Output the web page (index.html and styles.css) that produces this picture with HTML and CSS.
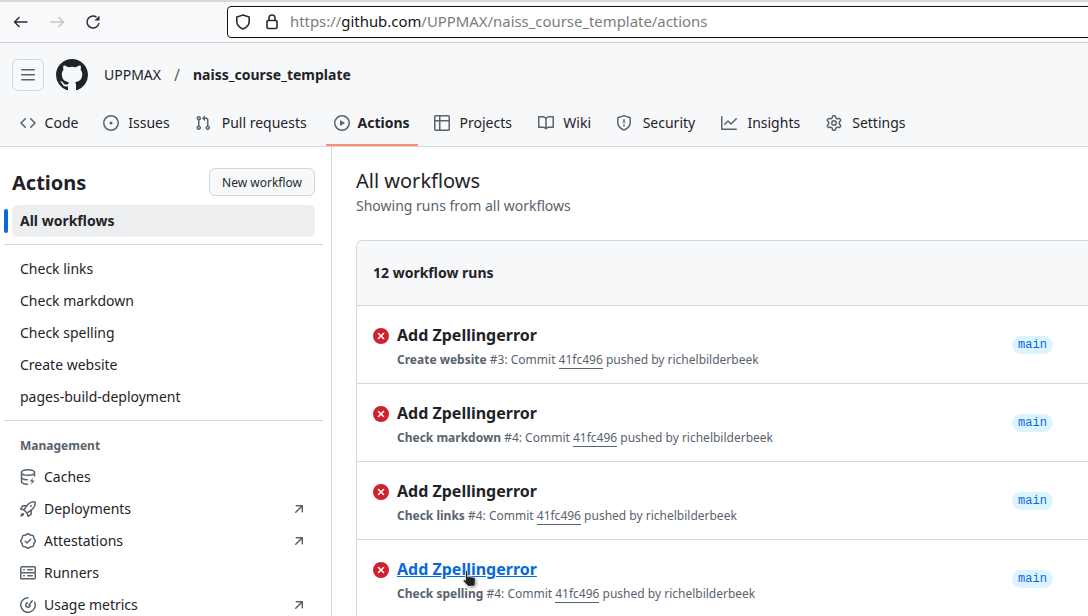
FILE: index.html
```html
<!DOCTYPE html>
<html lang="en">
<head>
<meta charset="utf-8">
<title>Actions · UPPMAX/naiss_course_template</title>
<link rel="stylesheet" href="styles.css">
</head>
<body>
<svg class="defs" width="0" height="0" aria-hidden="true">
  <symbol id="i-code" viewBox="0 0 16 16"><path d="m11.28 3.22 4.25 4.25a.75.75 0 0 1 0 1.06l-4.25 4.25a.749.749 0 0 1-1.275-.326.749.749 0 0 1 .215-.734L13.94 8l-3.72-3.72a.749.749 0 0 1 .326-1.275.749.749 0 0 1 .734.215Zm-6.56 0a.751.751 0 0 1 1.042.018.751.751 0 0 1 .018 1.042L2.06 8l3.72 3.72a.749.749 0 0 1-.326 1.275.749.749 0 0 1-.734-.215L.47 8.53a.75.75 0 0 1 0-1.06Z"/></symbol>
  <symbol id="i-issue" viewBox="0 0 16 16"><path d="M8 9.5a1.5 1.5 0 1 0 0-3 1.5 1.5 0 0 0 0 3Z"/><path d="M8 0a8 8 0 1 1 0 16A8 8 0 0 1 8 0ZM1.5 8a6.5 6.5 0 1 0 13 0 6.5 6.5 0 0 0-13 0Z"/></symbol>
  <symbol id="i-pr" viewBox="0 0 16 16"><path d="M1.5 3.25a2.25 2.25 0 1 1 3 2.122v5.256a2.251 2.251 0 1 1-1.5 0V5.372A2.25 2.25 0 0 1 1.5 3.25Zm5.677-.177L9.573.677A.25.25 0 0 1 10 .854V2.5h1A2.5 2.5 0 0 1 13.5 5v5.628a2.251 2.251 0 1 1-1.5 0V5a1 1 0 0 0-1-1h-1v1.646a.25.25 0 0 1-.427.177L7.177 3.427a.25.25 0 0 1 0-.354ZM3.75 2.5a.75.75 0 1 0 0 1.5.75.75 0 0 0 0-1.5Zm0 9.5a.75.75 0 1 0 0 1.5.75.75 0 0 0 0-1.5Zm8.25.75a.75.75 0 1 0 1.5 0 .75.75 0 0 0-1.5 0Z"/></symbol>
  <symbol id="i-play" viewBox="0 0 16 16"><path d="M8 0a8 8 0 1 1 0 16A8 8 0 0 1 8 0ZM1.5 8a6.5 6.5 0 1 0 13 0 6.5 6.5 0 0 0-13 0Zm4.879-2.773 4.264 2.559a.25.25 0 0 1 0 .428l-4.264 2.559A.25.25 0 0 1 6 10.559V5.442a.25.25 0 0 1 .379-.215Z"/></symbol>
  <symbol id="i-table" viewBox="0 0 16 16"><path d="M0 1.75C0 .784.784 0 1.75 0h12.5C15.216 0 16 .784 16 1.75v12.5A1.75 1.75 0 0 1 14.25 16H1.75A1.75 1.75 0 0 1 0 14.25ZM6.5 6.5v8h7.75a.25.25 0 0 0 .25-.25V6.5Zm8-1.5V1.75a.25.25 0 0 0-.25-.25H6.5V5Zm-13 1.5v7.75c0 .138.112.25.25.25H5v-8ZM5 5V1.5H1.75a.25.25 0 0 0-.25.25V5Z"/></symbol>
  <symbol id="i-book" viewBox="0 0 16 16"><path d="M0 1.75A.75.75 0 0 1 .75 1h4.253c1.227 0 2.317.59 3 1.501A3.743 3.743 0 0 1 11.006 1h4.245a.75.75 0 0 1 .75.75v10.5a.75.75 0 0 1-.75.75h-4.507a2.25 2.25 0 0 0-1.591.659l-.622.621a.75.75 0 0 1-1.06 0l-.622-.621A2.25 2.25 0 0 0 5.258 13H.75a.75.75 0 0 1-.75-.75Zm7.251 10.324.004-5.073-.002-2.253A2.25 2.25 0 0 0 5.003 2.5H1.5v9h3.757a3.75 3.75 0 0 1 1.994.574ZM8.755 4.75l-.004 7.322a3.752 3.752 0 0 1 1.992-.572H14.5v-9h-3.495a2.25 2.25 0 0 0-2.25 2.25Z"/></symbol>
  <symbol id="i-shield" viewBox="0 0 16 16"><path d="M7.467.133a1.748 1.748 0 0 1 1.066 0l5.25 1.68A1.75 1.75 0 0 1 15 3.48V7c0 1.566-.32 3.182-1.303 4.682-.983 1.498-2.585 2.813-5.032 3.855a1.697 1.697 0 0 1-1.33 0c-2.447-1.042-4.049-2.357-5.032-3.855C1.32 10.182 1 8.566 1 7V3.48a1.75 1.75 0 0 1 1.217-1.667Zm.61 1.429a.25.25 0 0 0-.153 0l-5.25 1.68a.25.25 0 0 0-.174.238V7c0 1.358.275 2.666 1.057 3.86.784 1.194 2.121 2.34 4.366 3.297a.196.196 0 0 0 .154 0c2.245-.956 3.582-2.104 4.366-3.298C13.225 9.666 13.5 8.36 13.5 7V3.48a.251.251 0 0 0-.174-.237l-5.25-1.68ZM8.75 4.75v3a.75.75 0 0 1-1.5 0v-3a.75.75 0 0 1 1.5 0ZM9 10.5a1 1 0 1 1-2 0 1 1 0 0 1 2 0Z"/></symbol>
  <symbol id="i-graph" viewBox="0 0 16 16"><path d="M1.5 1.75V13.5h13.75a.75.75 0 0 1 0 1.5H.75a.75.75 0 0 1-.75-.75V1.75a.75.75 0 0 1 1.5 0Zm14.28 2.53-5.25 5.25a.75.75 0 0 1-1.06 0L7 7.06 4.28 9.78a.751.751 0 0 1-1.042-.018.751.751 0 0 1-.018-1.042l3.25-3.25a.75.75 0 0 1 1.06 0L10 7.94l4.72-4.72a.751.751 0 0 1 1.042.018.751.751 0 0 1 .018 1.042Z"/></symbol>
  <symbol id="i-gear" viewBox="0 0 16 16"><path d="M8 0a8.2 8.2 0 0 1 .701.031C9.444.095 9.99.645 10.16 1.29l.288 1.107c.018.066.079.158.212.224.231.114.454.243.668.386.123.082.233.09.299.071l1.103-.303c.644-.176 1.392.021 1.82.63.27.385.506.792.704 1.218.315.675.111 1.422-.364 1.891l-.814.806c-.049.048-.098.147-.088.294.016.257.016.515 0 .772-.01.147.038.246.088.294l.814.806c.475.469.679 1.216.364 1.891a7.977 7.977 0 0 1-.704 1.217c-.428.61-1.176.807-1.82.63l-1.102-.302c-.067-.019-.177-.011-.3.071a5.909 5.909 0 0 1-.668.386c-.133.066-.194.158-.211.224l-.29 1.106c-.168.646-.715 1.196-1.458 1.26a8.006 8.006 0 0 1-1.402 0c-.743-.064-1.289-.614-1.458-1.26l-.289-1.106c-.018-.066-.079-.158-.212-.224a5.738 5.738 0 0 1-.668-.386c-.123-.082-.233-.09-.299-.071l-1.103.303c-.644.176-1.392-.021-1.82-.63a8.12 8.12 0 0 1-.704-1.218c-.315-.675-.111-1.422.363-1.891l.815-.806c.05-.048.098-.147.088-.294a6.214 6.214 0 0 1 0-.772c.01-.147-.038-.246-.088-.294l-.815-.806C.635 6.045.431 5.298.746 4.623a7.92 7.92 0 0 1 .704-1.217c.428-.61 1.176-.807 1.82-.63l1.102.302c.067.019.177.011.3-.071.214-.143.437-.272.668-.386.133-.066.194-.158.211-.224l.29-1.106C6.009.645 6.556.095 7.299.03 7.53.01 7.764 0 8 0Zm-.571 1.525c-.036.003-.108.036-.137.146l-.289 1.105c-.147.561-.549.967-.998 1.189-.173.086-.34.183-.5.29-.417.278-.97.423-1.529.27l-1.103-.303c-.109-.03-.175.016-.195.045-.22.312-.412.644-.573.99-.014.031-.021.11.059.19l.815.806c.411.406.562.957.53 1.456a4.709 4.709 0 0 0 0 .582c.032.499-.119 1.05-.53 1.456l-.815.806c-.081.08-.073.159-.059.19.162.346.353.677.573.989.02.03.085.076.195.046l1.102-.303c.56-.153 1.113-.008 1.53.27.161.107.328.204.501.29.447.222.85.629.997 1.189l.289 1.105c.029.109.101.143.137.146a6.6 6.6 0 0 0 1.142 0c.036-.003.108-.036.137-.146l.289-1.105c.147-.561.549-.967.998-1.189.173-.086.34-.183.5-.29.417-.278.97-.423 1.529-.27l1.103.303c.109.029.175-.016.195-.045.22-.313.411-.644.573-.99.014-.031.021-.11-.059-.19l-.815-.806c-.411-.406-.562-.957-.53-1.456a4.709 4.709 0 0 0 0-.582c-.032-.499.119-1.05.53-1.456l.815-.806c.081-.08.073-.159.059-.19a6.464 6.464 0 0 0-.573-.989c-.02-.03-.085-.076-.195-.046l-1.102.303c-.56.153-1.113.008-1.53-.27a4.44 4.44 0 0 0-.501-.29c-.447-.222-.85-.629-.997-1.189l-.289-1.105c-.029-.11-.101-.143-.137-.146a6.6 6.6 0 0 0-1.142 0ZM11 8a3 3 0 1 1-6 0 3 3 0 0 1 6 0ZM9.5 8a1.5 1.5 0 1 0-3.001.001A1.5 1.5 0 0 0 9.5 8Z"/></symbol>
  <symbol id="i-bars" viewBox="0 0 16 16"><path d="M1 2.75A.75.75 0 0 1 1.75 2h12.5a.75.75 0 0 1 0 1.5H1.75A.75.75 0 0 1 1 2.75Zm0 5A.75.75 0 0 1 1.75 7h12.5a.75.75 0 0 1 0 1.5H1.75A.75.75 0 0 1 1 7.75ZM1.75 12h12.5a.75.75 0 0 1 0 1.5H1.75a.75.75 0 0 1 0-1.5Z"/></symbol>
  <symbol id="i-github" viewBox="0 0 16 16"><path d="M8 0c4.42 0 8 3.58 8 8a8.013 8.013 0 0 1-5.45 7.59c-.4.08-.55-.17-.55-.38 0-.27.01-1.13.01-2.2 0-.75-.25-1.23-.54-1.48 1.78-.2 3.65-.88 3.65-3.95 0-.88-.31-1.59-.82-2.15.08-.2.36-1.02-.08-2.12 0 0-.67-.22-2.2.82-.64-.18-1.32-.27-2-.27-.68 0-1.36.09-2 .27-1.53-1.03-2.2-.82-2.2-.82-.44 1.1-.16 1.92-.08 2.12-.51.56-.82 1.28-.82 2.15 0 3.06 1.86 3.75 3.64 3.95-.23.2-.44.55-.51 1.07-.46.21-1.61.55-2.33-.66-.15-.24-.6-.83-1.23-.82-.67.01-.27.38.01.53.34.19.73.9.82 1.13.16.45.68 1.31 2.69.94 0 .67.01 1.3.01 1.49 0 .21-.15.45-.55.38A7.995 7.995 0 0 1 0 8c0-4.42 3.58-8 8-8Z"/></symbol>
  <symbol id="i-x" viewBox="0 0 16 16"><path d="M2.343 13.657A8 8 0 1 1 13.658 2.343 8 8 0 0 1 2.343 13.657ZM6.03 4.97a.751.751 0 0 0-1.042.018.751.751 0 0 0-.018 1.042L6.94 8 4.97 9.97a.749.749 0 0 0 .326 1.275.749.749 0 0 0 .734-.215L8 9.06l1.97 1.97a.749.749 0 0 0 1.275-.326.749.749 0 0 0-.215-.734L9.06 8l1.97-1.97a.749.749 0 0 0-.326-1.275.749.749 0 0 0-.734.215L8 6.94Z"/></symbol>
  <symbol id="i-cache" viewBox="0 0 16 16"><path d="M14.5 7V3.5C14.5 2 11.6.75 8 .75S1.5 2 1.5 3.5v9C1.5 14 4.2 15.2 7.5 15.25M1.5 3.5C1.5 5 4.4 6.25 8 6.25s6.5-1.25 6.5-2.75M1.5 8C1.5 9.4 4 10.6 7.2 10.75" fill="none" stroke="currentColor" stroke-width="1.5" stroke-linecap="round"/><path d="M13 8.5 9.8 12.4h2.2L11 15.8l3.6-4.4h-2.3Z"/></symbol>
  <symbol id="i-rocket" viewBox="0 0 16 16"><path d="M14.064 0h.186C15.216 0 16 .784 16 1.75v.186a8.752 8.752 0 0 1-2.564 6.186l-.458.459c-.314.314-.641.616-.979.904v3.207c0 .608-.315 1.172-.833 1.49l-2.774 1.707a.749.749 0 0 1-1.11-.418l-.954-3.102a1.214 1.214 0 0 1-.145-.125L3.754 9.816a1.218 1.218 0 0 1-.124-.145L.528 8.717a.749.749 0 0 1-.418-1.11l1.71-2.774A1.748 1.748 0 0 1 3.31 4h3.204c.288-.338.59-.665.904-.979l.459-.458A8.749 8.749 0 0 1 14.064 0ZM8.938 3.623h-.002l-.458.458c-.76.76-1.437 1.598-2.02 2.5l-1.5 2.317 2.143 2.143 2.317-1.5c.902-.583 1.74-1.26 2.499-2.02l.459-.458a7.25 7.25 0 0 0 2.123-5.127V1.75a.25.25 0 0 0-.25-.25h-.186a7.249 7.249 0 0 0-5.125 2.123ZM3.56 14.56c-.732.732-2.334 1.045-3.005 1.148a.234.234 0 0 1-.201-.064.234.234 0 0 1-.064-.201c.103-.671.416-2.273 1.15-3.003a1.502 1.502 0 1 1 2.12 2.12Zm6.94-3.935c-.088.06-.177.118-.266.175l-2.35 1.521.548 1.783 1.949-1.2a.25.25 0 0 0 .119-.213ZM3.678 8.116 5.2 5.766c.058-.09.117-.178.176-.266H3.309a.25.25 0 0 0-.213.119l-1.2 1.95ZM12 5a1 1 0 1 1-2 0 1 1 0 0 1 2 0Z"/></symbol>
  <symbol id="i-verified" viewBox="0 0 16 16"><path d="m9.585.52.929.68c.153.112.331.186.518.215l1.138.175a2.678 2.678 0 0 1 2.24 2.24l.174 1.139c.029.187.103.365.215.518l.68.928a2.677 2.677 0 0 1 0 3.17l-.68.928a1.174 1.174 0 0 0-.215.518l-.175 1.138a2.678 2.678 0 0 1-2.241 2.241l-1.138.175a1.17 1.17 0 0 0-.518.215l-.928.68a2.677 2.677 0 0 1-3.17 0l-.928-.68a1.174 1.174 0 0 0-.518-.215L3.83 14.41a2.678 2.678 0 0 1-2.24-2.24l-.175-1.138a1.17 1.17 0 0 0-.215-.518l-.68-.928a2.677 2.677 0 0 1 0-3.17l.68-.928c.112-.153.186-.331.215-.518l.175-1.14a2.678 2.678 0 0 1 2.24-2.24l1.139-.175c.187-.029.365-.103.518-.215l.928-.68a2.677 2.677 0 0 1 3.17 0ZM7.303 1.728l-.927.68a2.67 2.67 0 0 1-1.18.489l-1.137.174a1.179 1.179 0 0 0-.987.987l-.174 1.136a2.677 2.677 0 0 1-.489 1.18l-.68.928a1.18 1.18 0 0 0 0 1.394l.68.927c.256.348.424.753.489 1.18l.174 1.137c.078.509.478.909.987.987l1.136.174a2.67 2.67 0 0 1 1.18.489l.928.68c.414.305.979.305 1.394 0l.927-.68a2.67 2.67 0 0 1 1.18-.489l1.137-.174a1.18 1.18 0 0 0 .987-.987l.174-1.136a2.67 2.67 0 0 1 .489-1.18l.68-.928a1.176 1.176 0 0 0 0-1.394l-.68-.927a2.686 2.686 0 0 1-.489-1.18l-.174-1.137a1.179 1.179 0 0 0-.987-.987l-1.136-.174a2.677 2.677 0 0 1-1.18-.489l-.928-.68a1.176 1.176 0 0 0-1.394 0ZM11.28 6.78l-3.75 3.75a.75.75 0 0 1-1.06 0L4.72 8.78a.751.751 0 0 1 .018-1.042.751.751 0 0 1 1.042-.018l1.22 1.22 3.22-3.22a.751.751 0 0 1 1.042.018.751.751 0 0 1 .018 1.042Z"/></symbol>
  <symbol id="i-server" viewBox="0 0 16 16"><path d="M1.75 1h12.5c.966 0 1.75.784 1.75 1.75v4c0 .372-.116.717-.314 1 .198.283.314.628.314 1v4a1.75 1.75 0 0 1-1.75 1.75H1.75A1.75 1.75 0 0 1 0 13.75v-4c0-.372.116-.717.314-1a1.739 1.739 0 0 1-.314-1v-4C0 1.784.784 1 1.75 1ZM1.5 2.75v4c0 .138.112.25.25.25h12.5a.25.25 0 0 0 .25-.25v-4a.25.25 0 0 0-.25-.25H1.75a.25.25 0 0 0-.25.25Zm.25 5.75a.25.25 0 0 0-.25.25v4c0 .138.112.25.25.25h12.5a.25.25 0 0 0 .25-.25v-4a.25.25 0 0 0-.25-.25ZM7 4.75A.75.75 0 0 1 7.75 4h4.5a.75.75 0 0 1 0 1.5h-4.5A.75.75 0 0 1 7 4.75ZM7.75 10h4.5a.75.75 0 0 1 0 1.5h-4.5a.75.75 0 0 1 0-1.5ZM3 4.75A.75.75 0 0 1 3.75 4h.5a.75.75 0 0 1 0 1.5h-.5A.75.75 0 0 1 3 4.75ZM3.75 10h.5a.75.75 0 0 1 0 1.5h-.5a.75.75 0 0 1 0-1.5Z"/></symbol>
  <symbol id="i-meter" viewBox="0 0 16 16"><path d="M8 .75a7.25 7.25 0 1 0 6.7 4.5" fill="none" stroke="currentColor" stroke-width="1.5" stroke-linecap="round"/><path d="M12.2 3.8 8.9 8.2" fill="none" stroke="currentColor" stroke-width="1.5" stroke-linecap="round"/><path d="M8 5a3 3 0 1 0 3 3h-1.5A1.5 1.5 0 1 1 8 6.5Z"/></symbol>
  <symbol id="i-upright" viewBox="0 0 16 16"><path d="M4.53 4.75A.75.75 0 0 1 5.28 4h6.01a.75.75 0 0 1 .75.75v6.01a.75.75 0 0 1-1.5 0v-4.2l-5.26 5.261a.749.749 0 0 1-1.275-.326.749.749 0 0 1 .215-.734L9.48 5.5h-4.2a.75.75 0 0 1-.75-.75Z"/></symbol>
</svg>

<div class="page">
  <div class="browser">
    <div class="nav-buttons">
      <svg class="b-icon" viewBox="0 0 16 16"><path d="M14.5 8H1.5M6.500 3 1.500 8l5 5"/></svg>
      <svg class="b-icon off" viewBox="0 0 16 16"><path d="M1.5 8H14.5M9.500 3l5 5-5 5"/></svg>
      <svg class="b-icon" viewBox="0 0 16 16"><path d="M14 9A6 6 0 1 1 11.500 3.100"/><path class="solid" d="M14.500 1.500v5h-5Z"/></svg>
    </div>
    <div class="urlbar">
      <svg class="b-icon heavy" viewBox="0 0 16 16"><path d="M8 1 14.200 3v4.600c0 3.300-2.400 5.900-6.200 7.400-3.800-1.500-6.200-4.100-6.200-7.400V3Z"/></svg>
      <svg class="b-icon heavy" viewBox="0 0 16 16"><path d="M3 7.500a1 1 0 0 1 1-1h8a1 1 0 0 1 1 1v6a1 1 0 0 1-1 1H4a1 1 0 0 1-1-1ZM5 6.500v-2.500a3 3 0 0 1 6 0v2.500"/></svg>
      <span class="url">https://<span class="url-host">github.com</span>/UPPMAX/naiss_course_template/actions</span>
    </div>
  </div>

  <header class="gh-header">
    <div class="repo-line">
      <button class="menu-btn"><svg class="icon"><use href="#i-bars"/></svg></button>
      <svg class="logo"><use href="#i-github"/></svg>
      <span class="owner">UPPMAX</span>
      <span class="slash">/</span>
      <strong class="repo">naiss_course_template</strong>
    </div>
    <nav class="tabs">
      <a class="tab"><svg class="icon"><use href="#i-code"/></svg><span class="label" data-content="Code">Code</span></a>
      <a class="tab"><svg class="icon"><use href="#i-issue"/></svg><span class="label" data-content="Issues">Issues</span></a>
      <a class="tab"><svg class="icon"><use href="#i-pr"/></svg><span class="label" data-content="Pull requests">Pull requests</span></a>
      <a class="tab active"><svg class="icon"><use href="#i-play"/></svg><span class="label" data-content="Actions">Actions</span></a>
      <a class="tab"><svg class="icon"><use href="#i-table"/></svg><span class="label" data-content="Projects">Projects</span></a>
      <a class="tab"><svg class="icon"><use href="#i-book"/></svg><span class="label" data-content="Wiki">Wiki</span></a>
      <a class="tab"><svg class="icon"><use href="#i-shield"/></svg><span class="label" data-content="Security">Security</span></a>
      <a class="tab"><svg class="icon"><use href="#i-graph"/></svg><span class="label" data-content="Insights">Insights</span></a>
      <a class="tab"><svg class="icon"><use href="#i-gear"/></svg><span class="label" data-content="Settings">Settings</span></a>
    </nav>
  </header>

  <div class="content">
    <aside class="sidebar">
      <div class="side-head">
        <h2>Actions</h2>
        <button class="new-btn">New workflow</button>
      </div>
      <a class="side-item current">All workflows</a>
      <hr class="rule">
      <a class="side-item">Check links</a>
      <a class="side-item">Check markdown</a>
      <a class="side-item">Check spelling</a>
      <a class="side-item">Create website</a>
      <a class="side-item">pages-build-deployment</a>
      <hr class="rule">
      <div class="side-label">Management</div>
      <a class="side-item with-icon"><svg class="icon"><use href="#i-cache"/></svg>Caches</a>
      <a class="side-item with-icon"><svg class="icon"><use href="#i-rocket"/></svg>Deployments<svg class="icon ext"><use href="#i-upright"/></svg></a>
      <a class="side-item with-icon"><svg class="icon"><use href="#i-verified"/></svg>Attestations<svg class="icon ext"><use href="#i-upright"/></svg></a>
      <a class="side-item with-icon"><svg class="icon"><use href="#i-server"/></svg>Runners</a>
      <a class="side-item with-icon"><svg class="icon"><use href="#i-meter"/></svg>Usage metrics<svg class="icon ext"><use href="#i-upright"/></svg></a>
    </aside>

    <main class="main">
      <h1>All workflows</h1>
      <p class="sub">Showing runs from all workflows</p>
      <section class="box">
        <div class="box-head">12 workflow runs</div>
        <article class="run">
          <svg class="icon fail"><use href="#i-x"/></svg>
          <div>
            <div class="run-title">Add Zpellingerror</div>
            <div class="run-meta"><b>Create website</b> #3: Commit <a class="sha">41fc496</a> pushed by richelbilderbeek</div>
          </div>
          <span class="branch">main</span>
        </article>
        <article class="run">
          <svg class="icon fail"><use href="#i-x"/></svg>
          <div>
            <div class="run-title">Add Zpellingerror</div>
            <div class="run-meta"><b>Check markdown</b> #4: Commit <a class="sha">41fc496</a> pushed by richelbilderbeek</div>
          </div>
          <span class="branch">main</span>
        </article>
        <article class="run">
          <svg class="icon fail"><use href="#i-x"/></svg>
          <div>
            <div class="run-title">Add Zpellingerror</div>
            <div class="run-meta"><b>Check links</b> #4: Commit <a class="sha">41fc496</a> pushed by richelbilderbeek</div>
          </div>
          <span class="branch">main</span>
        </article>
        <article class="run">
          <svg class="icon fail"><use href="#i-x"/></svg>
          <div>
            <div class="run-title hover">Add Zpellingerror</div>
            <div class="run-meta"><b>Check spelling</b> #4: Commit <a class="sha">41fc496</a> pushed by richelbilderbeek</div>
          </div>
          <span class="branch">main</span>
        </article>
      </section>
    </main>
  </div>

  <svg class="cursor" viewBox="0 0 16 20"><path d="M4 1.500c0-1.200 2.200-1.200 2.200 0V7l.8-.2c.6-.5 1.400-.4 1.900.1l.8.1c.6-.3 1.300-.2 1.700.3l.7.1c.9-.1 1.700.5 1.700 1.300v4c0 1.500-.6 2.600-1.300 3.600H6.500L2 11.200c-.8-1 .4-2.100 1.500-1.300l.5.4Z" fill="#222" stroke="#fff" stroke-width=".7"/></svg>
</div>
</body>
</html>
```
FILE: styles.css
```css
* { box-sizing: border-box; }
html, body { margin: 0; height: 100%; overflow: hidden; background: #fff; }
body { font-family: "Noto Sans", "Liberation Sans", sans-serif; font-size: 14px; color: #1f2328; }
.defs { position: absolute; }
.page { position: relative; width: 1088px; height: 616px; overflow: hidden; }

.browser { height: 43px; display: flex; align-items: center; background: #f9f9fb; border-top: 2px solid #d8d8d8; border-bottom: 1px solid #cfcfd8; padding-left: 13px; }
.nav-buttons { display: flex; gap: 20px; width: 214px; flex: none; }
.b-icon { width: 16px; height: 16px; fill: none; stroke: #2b2a33; stroke-width: 1.4; flex: none; }
.b-icon.off { stroke: #c4c4c8; }
.b-icon.heavy { stroke-width: 1.6; }
.b-icon .solid { fill: #2b2a33; stroke: none; }
.urlbar { flex: none; width: 900px; height: 32px; display: flex; align-items: center; gap: 13px; background: #fff; border: 1px solid #111; border-radius: 4px; padding-left: 7px; }
.url { font-size: 14.9px; color: #7c7c80; margin-left: -3px; white-space: nowrap; padding-bottom: 3px; }
.url-host { color: #15141a; }

.gh-header { height: 104px; background: #f6f8fa; border-bottom: 1px solid #d1d9e0; }
.repo-line { height: 56px; padding: 16px 12px 8px; display: flex; align-items: center; }
.menu-btn { width: 32px; height: 32px; padding: 0; display: flex; align-items: center; justify-content: center; background: #f6f8fa; border: 1px solid #d1d9e0; border-radius: 6px; color: #59636e; }
.icon { width: 16px; height: 16px; fill: currentColor; flex: none; }
.logo { width: 32px; height: 32px; margin-left: 12px; fill: #1f2328; }
.owner { margin-left: 16px; padding-bottom: 1px; }
.slash { margin: 0 13px; color: #59636e; font-size: 16px; padding-bottom: 1px; }
.repo { font-weight: 700; padding-bottom: 1px; }
.tabs { display: flex; gap: 8px; padding: 0 12px; height: 47px; }
.tab { position: relative; display: flex; align-items: center; gap: 8px; padding: 0 8px; height: 47px; white-space: nowrap; color: #1f2328; }
.tab .icon { color: #59636e; }
.tab .label { text-align: center; }
.tab .label::before { content: attr(data-content); display: block; height: 0; overflow: hidden; visibility: hidden; font-weight: 700; }
.tab.active { font-weight: 700; }
.tab.active::after { content: ""; position: absolute; left: 0; right: 0; bottom: 0; height: 2px; background: #fd8c73; }

.content { display: flex; height: 469px; }
.sidebar { width: 332px; flex: none; border-right: 1px solid #d1d9e0; padding: 21px 8px 0 4px; }
.side-head { display: flex; align-items: center; justify-content: space-between; margin: 0 8px 9px 8px; height: 28px; }
.side-head h2 { margin: 0; font-size: 20px; font-weight: 700; }
.new-btn { height: 28px; width: 106px; padding: 0; background: #f6f8fa; border: 1px solid #d1d9e0; border-radius: 6px; font: 12px "Noto Sans", sans-serif; color: #25292e; }
.side-item { display: flex; align-items: center; height: 32px; margin-left: 8px; margin-right: 8px; padding: 0 8px 1px; border-radius: 6px; gap: 8px; color: #1f2328; }
.side-item.current { position: relative; background: #eceef0; font-weight: 700; }
.side-item.current::before { content: ""; position: absolute; left: -8px; top: 4px; width: 4px; height: 24px; border-radius: 2px; background: #0969da; }
.side-item .icon { color: #59636e; }
.side-item .ext { margin-left: auto; }
.rule { margin: 7px 0 8px; border: 0; border-top: 1px solid #d1d9e0; }
.side-label { height: 32px; margin-left: 16px; display: flex; align-items: center; font-size: 12px; font-weight: 700; color: #59636e; }

.main { flex: 1; min-width: 0; padding: 21px 0 0 24px; overflow: hidden; }
.main h1 { margin: 0; font-size: 20px; font-weight: 400; line-height: 26px; }
.sub { margin: 0; line-height: 24px; color: #59636e; }
.box { width: 800px; margin-top: 22px; border: 1px solid #d1d9e0; border-bottom: 0; border-right: 0; border-radius: 6px 0 0 0; }
.box-head { height: 65px; padding: 0 0 1px 16px; display: flex; align-items: center; background: #f6f8fa; border-bottom: 1px solid #d1d9e0; font-weight: 700; font-size: 14px; border-radius: 6px 0 0 0; }
.run { height: 78px; display: grid; grid-template-columns: 16px 615px auto; column-gap: 8px; padding: 20px 0 0 16px; border-bottom: 1px solid #d1d9e0; align-items: start; justify-content: start; }
.fail { color: #cf222e; margin-top: 2px; }
.run-title { font-size: 16px; font-weight: 700; line-height: 18px; width: max-content; }
.run-title.hover { color: #0969da; text-decoration: underline; }
.run-meta { margin-top: 7px; font-size: 12px; line-height: 18px; color: #59636e; }
.run-meta b { font-weight: 700; }
.sha { border-bottom: 1px solid #59636e; }
.branch { margin-left: -8px; margin-top: 10px; width: 41px; height: 18px; padding-bottom: 1px; display: flex; align-items: center; justify-content: center; border-radius: 2em; background: #ddf4ff; color: #0969da; font: 12px "Liberation Mono", monospace; }

.cursor { position: absolute; left: 461px; top: 570px; width: 17px; height: 20px; filter: drop-shadow(1px 1px 1px rgba(0,0,0,.35)); }
```
